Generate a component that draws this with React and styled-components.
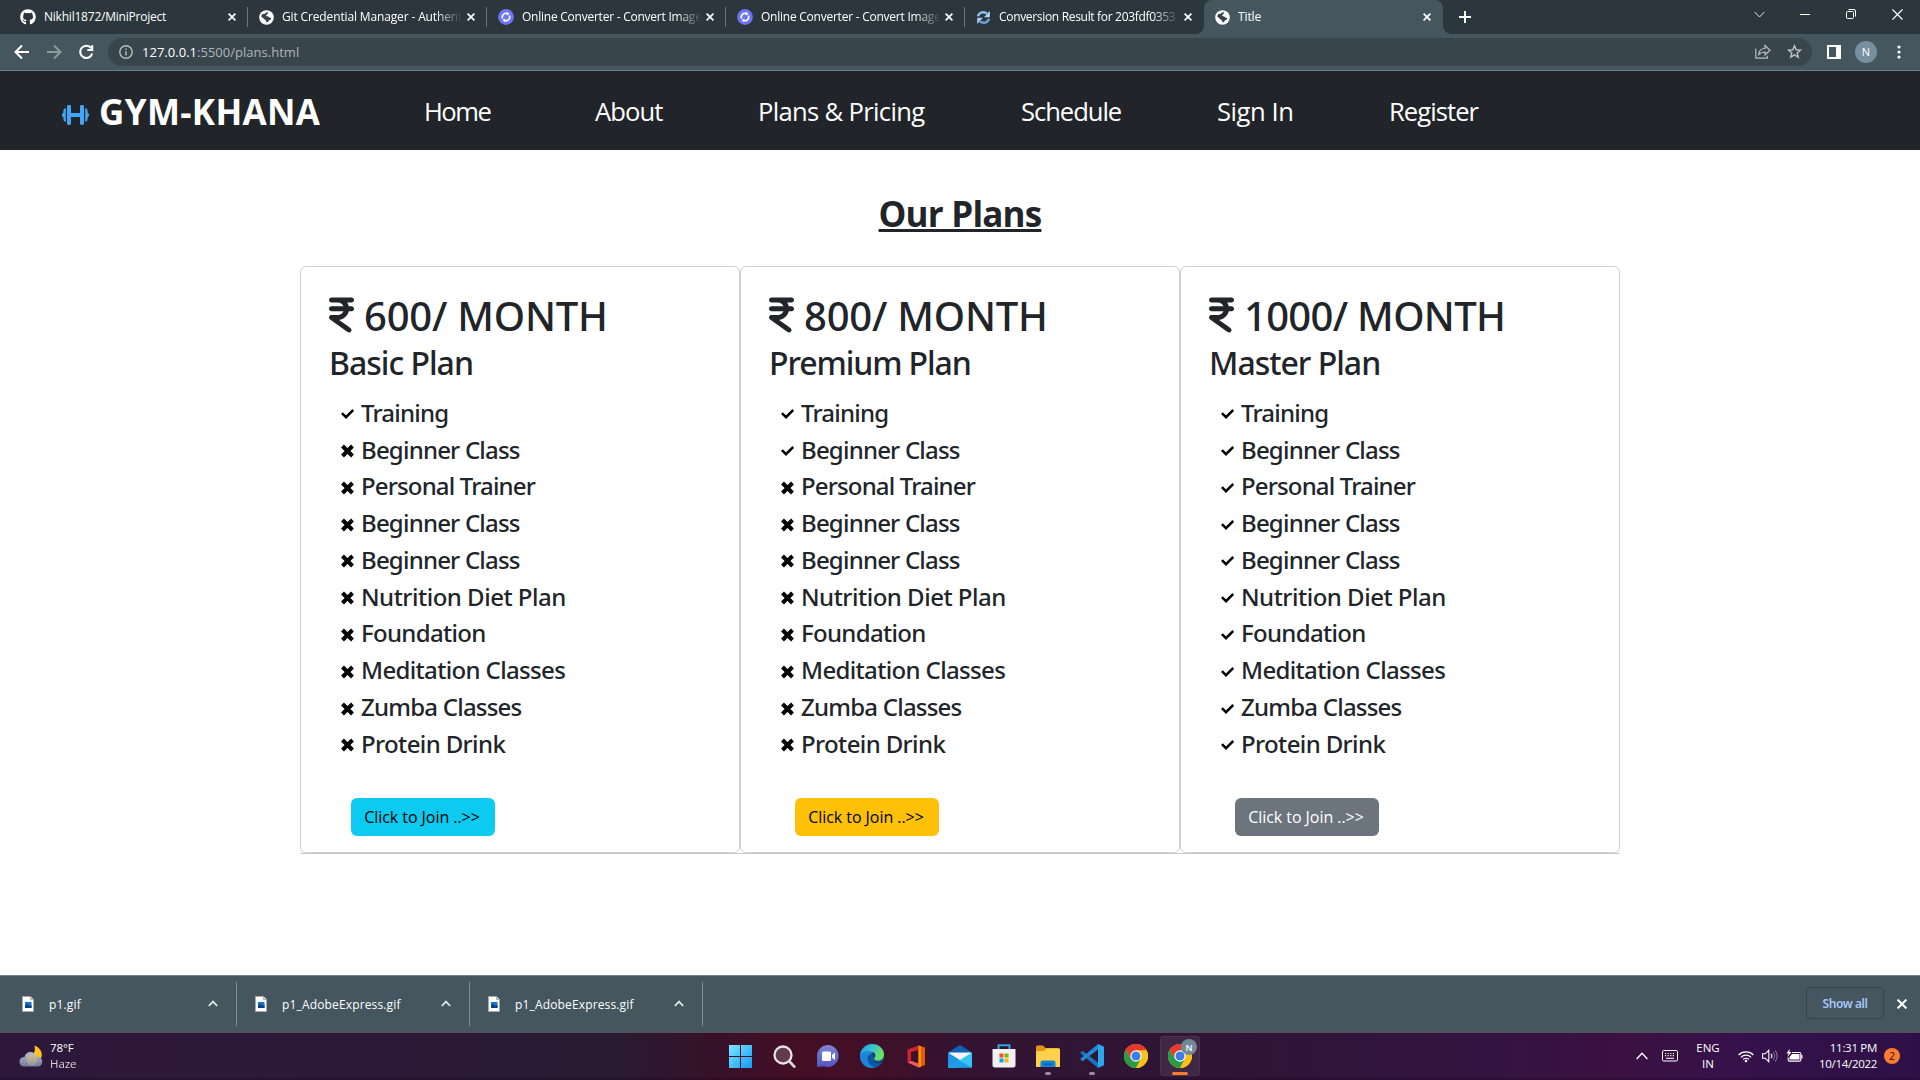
import React from "react";
import styled, { createGlobalStyle } from "styled-components";
import { FaGithub, FaIndianRupeeSign } from "react-icons/fa6";

const GlobalStyle = createGlobalStyle`
  * { box-sizing: border-box; }
  body { margin: 0; background: #fff; overflow: hidden; }
  body, button { font-family: "Open Sans", "Noto Sans", sans-serif; }
  svg { display: block; flex: none; }
`;

const Screen = styled.div`
  display: flex;
  flex-direction: column;
  width: 1920px;
  height: 1080px;
  background: #fff;
  overflow: hidden;
`;

/* ---------- browser chrome ---------- */

const TabStrip = styled.div`
  display: flex;
  height: 34px;
  padding-left: 9px;
  background: #2c373d;
  color: #fff;
`;

const Tab = styled.div`
  position: relative;
  display: flex;
  align-items: center;
  width: 239px;
  height: 34px;
  padding: 0 12px 0 11px;
  border-radius: 8px 8px 0 0;
  background: ${(p) => (p.$active ? "#45565f" : "transparent")};
  &::after {
    content: "";
    position: absolute;
    right: 0;
    top: 7px;
    width: 1px;
    height: 20px;
    background: ${(p) => (p.$divider ? "#67767d" : "transparent")};
  }
`;

const TabFoot = styled.div`
  align-self: flex-end;
  width: 8px;
  height: 8px;
  margin: ${(p) => (p.$left ? "0 0 0 -8px" : "0 -8px 0 0")};
  background: radial-gradient(circle at ${(p) => (p.$left ? "0 0" : "100% 0")}, transparent 7.5px, #45565f 8px);
`;

const TabTitle = styled.div`
  width: 178px;
  margin-left: 8px;
  overflow: hidden;
  white-space: nowrap;
  font-size: 12px;
  line-height: 18px;
  letter-spacing: ${(p) => p.$track}px;
  mask-image: ${(p) => (p.$fade ? "linear-gradient(90deg, #000 154px, transparent 180px)" : "none")};
`;

const TabClose = styled.div`
  display: flex;
  margin-left: auto;
`;

const NewTab = styled.div`
  display: flex;
  align-items: center;
  margin-left: 16px;
`;

const WindowControls = styled.div`
  display: flex;
  height: 28px;
  margin-left: auto;
  & > span {
    display: flex;
    align-items: center;
    justify-content: center;
    width: 46px;
  }
`;

const Toolbar = styled.div`
  display: flex;
  align-items: center;
  height: 37px;
  padding: 0 14px 1px 14px;
  border-bottom: 1px solid #6c8086;
  background: #45565f;
  color: #fff;
`;

const NavButtons = styled.div`
  display: flex;
  gap: 16px;
`;

const Omnibox = styled.div`
  display: flex;
  align-items: center;
  width: 1704px;
  height: 28px;
  margin-left: 14px;
  padding: 0 10px 0 11px;
  border-radius: 14px;
  background: #38454c;
`;

const Url = styled.div`
  flex: 1;
  margin-left: 9px;
  font-size: 13px;
  line-height: 20px;
  letter-spacing: 0.02px;
  color: #aeb6ba;
  & > span { color: #fff; }
`;

const OmniActions = styled.div`
  display: flex;
  align-items: center;
  gap: 16px;
`;

const ToolbarRight = styled.div`
  display: flex;
  align-items: center;
  margin-left: 15px;
`;

const Avatar = styled.div`
  display: flex;
  align-items: center;
  justify-content: center;
  width: 22px;
  height: 22px;
  margin: 0 20px 0 14px;
  border-radius: 50%;
  background: #7690a0;
  font-size: 11px;
`;

/* ---------- site ---------- */

const Navbar = styled.nav`
  display: flex;
  align-items: center;
  height: 79px;
  padding: 2px 0 0 62px;
  background: #212529;
  color: #fff;
`;

const Brand = styled.div`
  display: flex;
  align-items: center;
  width: 362px;
  font-size: 35px;
  font-weight: 700;
  line-height: 48px;
  letter-spacing: 0.35px;
  & > svg { margin: 7px 10px 0 0; }
`;

const NavLink = styled.a`
  width: ${(p) => p.$width}px;
  font-size: 25.6px;
  line-height: 38px;
  white-space: nowrap;
  letter-spacing: ${(p) => p.$track}px;
`;

const Page = styled.main`
  flex: 1;
  color: #212529;
`;

const Heading = styled.h1`
  margin: 0;
  padding-top: 42px;
  height: 116px;
  text-align: center;
  font-size: 35px;
  font-weight: 700;
  line-height: 44px;
  letter-spacing: -0.8px;
  text-decoration: underline;
  text-decoration-thickness: 3px;
  text-underline-offset: 2px;
`;

const Plans = styled.section`
  display: flex;
  width: 1320px;
  height: 588px;
  margin: 0 auto;
  border-bottom: 1px solid #c8c8c8;
`;

const Card = styled.article`
  width: 440px;
  height: 587px;
  padding: 25px 28px;
  border: 1px solid #d0d0d1;
  border-radius: 6px;
`;

const Price = styled.h2`
  display: flex;
  margin: 0;
  font-family: "Noto Sans", sans-serif;
  font-size: 40px;
  font-weight: 500;
  line-height: 48px;
  white-space: nowrap;
  letter-spacing: ${(p) => p.$track}px;
  & > svg {
    width: 25px;
    height: 40px;
    margin: 3px 10px 0 0;
  }
`;

const PlanName = styled.h3`
  margin: 4px 0 15.4px;
  font-family: "Noto Sans", sans-serif;
  font-size: 32px;
  font-weight: 500;
  line-height: 38.4px;
  letter-spacing: ${(p) => p.$track}px;
`;

const Features = styled.ul`
  display: flex;
  flex-direction: column;
  gap: 8px;
  margin: 0;
  padding: 0 0 0 12px;
  list-style: none;
`;

const Feature = styled.li`
  display: flex;
  align-items: center;
  height: 28.8px;
  font-family: "Noto Sans", sans-serif;
  font-size: 24px;
  font-weight: 500;
  white-space: nowrap;
  letter-spacing: ${(p) => p.$track}px;
  & > svg { margin: 4px 7px 0 0; }
`;

const JoinButton = styled.button`
  display: block;
  width: 144px;
  height: 38px;
  margin: 40.6px 0 0 ${(p) => p.$indent}px;
  padding: 0 2px 0 0;
  border: 0;
  border-radius: 6px;
  background: ${(p) => p.$bg};
  color: ${(p) => p.$fg};
  font-size: 16px;
  line-height: 24px;
  white-space: pre;
  letter-spacing: -0.05px;
`;

/* ---------- download shelf ---------- */

const Shelf = styled.div`
  display: flex;
  align-items: center;
  height: 58px;
  padding-right: 13px;
  border-top: 1px solid #6f8189;
  border-bottom: 1px solid #5d4c5c;
  background: #45565f;
  color: #fff;
`;

const Download = styled.div`
  display: flex;
  align-items: center;
  width: ${(p) => p.$width}px;
  height: 44px;
  padding: 0 18px 0 ${(p) => p.$width - 215}px;
  border-right: 1px solid #7f8f96;
  font-size: 12px;
  letter-spacing: 0.15px;
  & > svg { margin-bottom: 1px; }
  & > span { flex: 1; margin: 0 0 0 15px; }
`;

const ShowAll = styled.div`
  display: flex;
  align-items: center;
  justify-content: center;
  width: 78px;
  height: 32px;
  margin: 0 13px 2px auto;
  border: 1px solid #37444b;
  border-radius: 4px;
  color: #a5c5f8;
  font-family: "Noto Sans", sans-serif;
  font-size: 12px;
  font-weight: 600;
  letter-spacing: -0.4px;
`;

/* ---------- taskbar ---------- */

const Taskbar = styled.div`
  display: flex;
  align-items: center;
  height: 47px;
  padding-bottom: 1px;
  background:
    linear-gradient(180deg, transparent 44px, rgba(10, 0, 20, 0.3) 47px),
    linear-gradient(90deg, #2d183b 0, #2c1937 400px, #291b31 620px, #361129 715px, #430f25 790px, #430f26 860px, #351330 950px, #301534 1080px, #2e1537 1250px, #351340 1500px, #3a1141 1620px, #36114b 1740px, #2d1146 1920px);
  color: #fff;
`;

const Weather = styled.div`
  display: flex;
  align-items: center;
  width: 718px;
  padding-left: 19px;
  gap: 7px;
`;

const SmallLines = styled.div`
  display: flex;
  flex-direction: column;
  width: ${(p) => p.$width}px;
  text-align: ${(p) => p.$align || "left"};
  font-size: 11.5px;
  line-height: 16px;
  white-space: nowrap;
  letter-spacing: ${(p) => p.$track || 0}px;
  & > span:last-child { opacity: ${(p) => (p.$dim ? 0.8 : 1)}; }
`;

const AppSlot = styled.div`
  position: relative;
  display: flex;
  align-items: center;
  justify-content: center;
  width: 40px;
  height: 40px;
  margin: 0 2px;
  border-radius: 4px;
  background: ${(p) => (p.$active ? "rgba(255,255,255,0.08)" : "transparent")};
  box-shadow: ${(p) => (p.$active ? "inset 0 0 0 1px rgba(255,255,255,0.05)" : "none")};
  &::after {
    content: "";
    position: absolute;
    bottom: 1px;
    width: ${(p) => (p.$active ? 16 : p.$running ? 6 : 0)}px;
    height: 3px;
    border-radius: 2px;
    background: ${(p) => (p.$active ? "#ff7a2e" : "#998f9c")};
  }
`;

const ProfileBadge = styled.div`
  position: absolute;
  right: 3px;
  top: 3px;
  display: flex;
  align-items: center;
  justify-content: center;
  width: 16px;
  height: 16px;
  border-radius: 50%;
  background: #728a97;
  font-size: 9px;
  font-weight: 600;
`;

const Tray = styled.div`
  display: flex;
  align-items: center;
  margin-left: auto;
  padding-right: 20px;
`;

const TrayGap = styled.div`
  width: ${(p) => p.$width}px;
`;

const Count = styled.div`
  display: flex;
  align-items: center;
  justify-content: center;
  width: 16px;
  height: 16px;
  margin-left: 7px;
  border-radius: 50%;
  background: #ff7b30;
  color: #2a1024;
  font-size: 10.5px;
`;

/* ---------- drawings ---------- */

const Line = ({ w = 16, h = w, sw = 1, color = "#fff", d }) => (
  <svg width={w} height={h} viewBox={`0 0 ${w} ${h}`} fill="none" stroke={color} strokeWidth={sw}>
    <path d={d} />
  </svg>
);

const Cross = ({ size = 8, sw = 1.7 }) => (
  <Line w={size} sw={sw} d={`M.6 .6L${size - 0.6} ${size - 0.6}M${size - 0.6} .6L.6 ${size - 0.6}`} />
);

const Globe = () => (
  <svg width="15" height="15" viewBox="0 0 15 15">
    <circle cx="7.5" cy="7.5" r="7.3" fill="#fff" />
    <path d="M3 4.2C4.3 3.4 5.6 4.6 6.3 3.2C7.2 2.2 8.6 2 9.4 2.6C8.2 3.2 9 4.5 7.6 4.9C6.5 5.4 6.8 6.2 8.4 6.3C10 6.5 9.6 8 11.6 7.7C12.6 8.4 12.3 9.6 11 9.7C9.6 10 9.8 11.8 7.6 12.6C6.8 11.8 7.8 11 6.6 10C5.7 9.1 4.8 9.4 4.4 8.2C4 7.2 2.6 7.4 2.2 6.4Z" fill="#34434a" />
  </svg>
);

const Converter = () => (
  <svg width="16" height="16" viewBox="0 0 16 16" fill="none">
    <circle cx="8" cy="8" r="7.9" fill="#6d74f2" />
    <path d="M4.6 9.5A3.7 3.7 0 0 1 9.6 4.7M11.4 6.5A3.7 3.7 0 0 1 6.4 11.3" stroke="#fff" strokeWidth="1.6" />
    <path d="M9 2.8l2.6 2.3-3 1.3zM7 13.2l-2.6-2.3 3-1.3z" fill="#fff" />
  </svg>
);

const Refresh = () => (
  <svg width="15" height="15" viewBox="0 0 15 15" fill="none">
    <path d="M2 6.2C3 2.2 8 1 11 3.6" stroke="#8fc0ee" strokeWidth="2.4" />
    <path d="M13.8 1v6.2H8z" fill="#b5d6f5" />
    <path d="M13 8.8C12 12.8 7 14 4 11.4" stroke="#6fa3d8" strokeWidth="2.4" />
    <path d="M1.2 14V7.8H7z" fill="#a2c9f0" />
  </svg>
);

const Dumbbell = () => (
  <svg width="27" height="20" viewBox="0 0 27 20" fill="#42a5f5">
    <rect x="5" y="0" width="4" height="20" rx="1.4" />
    <rect x="18" y="0" width="4" height="20" rx="1.4" />
    <rect x="8" y="8" width="11" height="4" />
    <path d="M3.800 3.200v13.600C2 16.800 1.400 16 1.300 12 .300 11.800 0 11 0 10S.300 8.200 1.300 8C1.400 4 2 3.200 3.800 3.200zM23.200 3.200v13.600c1.800 0 2.400-.8 2.500-4.800 1-.2 1.300-1 1.300-2s-.3-1.800-1.300-2C25.600 4 25 3.200 23.200 3.200z" />
  </svg>
);

const Mark = ({ on }) =>
  on ? (
    <Line w={13} h={14} sw={2.5} color="#000" d="M.9 6.200L5 10.200L12.300 3" />
  ) : (
    <Line w={13} h={14} sw={4} color="#000" d="M1.500 2L11.500 12M11.500 2L1.500 12" />
  );

const FileIcon = () => (
  <svg width="12" height="16" viewBox="0 0 12 16">
    <path d="M.5.5h8l3 3v12H.5z" fill="#fff" stroke="#a9a9a9" />
    <path d="M8.500.500v3h3" fill="#ddd" stroke="#a9a9a9" />
    <rect x="3" y="6" width="6.500" height="6" fill="#1a73c8" />
    <path d="M3 12V9.500l2-1.500 2.500 2 2-1V12z" fill="#0b3f8c" />
  </svg>
);

const MoonCloud = () => (
  <svg width="24" height="22" viewBox="0 0 24 22">
    <defs>
      <linearGradient id="cloud" x1="0" y1="0" x2="0" y2="1">
        <stop offset="0" stopColor="#b4bdd6" /><stop offset="1" stopColor="#717a9d" />
      </linearGradient>
      <linearGradient id="haze" x1="0" y1="0" x2="0" y2="1">
        <stop offset="0" stopColor="#d0c28a" /><stop offset="1" stopColor="#9c9a94" />
      </linearGradient>
    </defs>
    <path d="M15.500.500C20 2 23 6 22.800 10.500C22.500 14 20 16 17 16.500L12 12C15.500 9 16.500 5 15.500.500z" fill="#ffc21f" />
    <path d="M5 21.500C2 21.500.500 19.500.500 16.500S2.500 12 5.500 12C6 9 8.500 7 11.500 7s5 2 5.300 4.500C20.500 11.300 23.300 13.500 23.300 16.500S21.500 21.500 18 21.500z" fill="url(#cloud)" />
    <circle cx="13" cy="15" r="5.500" fill="url(#haze)" opacity=".85" />
  </svg>
);

const WindowsLogo = () => (
  <svg width="23" height="23" viewBox="0 0 23 23">
    <defs>
      <linearGradient id="win" x1="0" y1="0" x2="1" y2="1">
        <stop offset="0" stopColor="#7ce6ff" /><stop offset="1" stopColor="#139bf5" />
      </linearGradient>
    </defs>
    <path d="M0 0h11v11H0zM12 0h11v11H12zM0 12h11v11H0zM12 12h11v11H12z" fill="url(#win)" />
  </svg>
);

const SearchIcon = () => (
  <svg width="23" height="23" viewBox="0 0 23 23" fill="none">
    <circle cx="10" cy="10" r="8.500" fill="rgba(255,255,255,.18)" stroke="#e6e3e5" strokeWidth="2.300" />
    <path d="M16.300 16.300L21.300 21.600" stroke="#d9d5d8" strokeWidth="2.800" strokeLinecap="round" />
  </svg>
);

const ChatIcon = () => (
  <svg width="24" height="24" viewBox="0 0 24 24">
    <defs>
      <linearGradient id="chat" x1="0" y1="0" x2="0" y2="1">
        <stop offset="0" stopColor="#7e86cf" /><stop offset="1" stopColor="#5356c4" />
      </linearGradient>
    </defs>
    <path d="M12 1a11 11 0 1 1-4.500 21.200L1 23V12A11 11 0 0 1 12 1z" fill="url(#chat)" />
    <rect x="6" y="7.500" width="9" height="9.500" rx="1.300" fill="#fff" />
    <path d="M16 10.700l3-2.300v7.600l-3-2.300z" fill="#fff" />
  </svg>
);

const EdgeIcon = () => (
  <svg width="24" height="24" viewBox="0 0 24 24">
    <defs>
      <linearGradient id="edge" x1="0" y1="0" x2="1" y2=".4">
        <stop offset="0" stopColor="#1f95dc" /><stop offset=".5" stopColor="#35c1d8" /><stop offset="1" stopColor="#6be35d" />
      </linearGradient>
    </defs>
    <circle cx="12" cy="12" r="12" fill="#0c59a4" />
    <path d="M0 12C.5 5 5.500 0 12 0c7 0 12 5 12 10.500 0 4-3 6-6 6-2.500 0-4.500-1-3.500-2.500 1.500-2.500.5-6-3.500-6C6 8 2 10 0 12z" fill="url(#edge)" />
    <path d="M0 12C1 8.500 4.500 7 8 7c3 0 5 1 6 3C8.500 8.500 6.500 13 8 17c1 3 3.500 5.500 7 6.500C7 25.500 0 20 0 12z" fill="#1b86d6" />
    <path d="M14.500 14c1-1.500 1.500-4-.8-5.400C9.500 8.500 9 13.500 11.500 16c3.500 3 8 2 11.500.500 1-.5.500.700-.3 1.800-2.700 1.200-9 2.200-12.200-3.300C9 12 10 9.800 12 9.200" fill="#431028" opacity=".55" />
  </svg>
);

const OfficeIcon = () => (
  <svg width="20" height="23" viewBox="0 0 20 23">
    <path d="M12.500.500L19 2.500V20l-6.500 2.500z" fill="#e8590c" />
    <path d="M12.500.500L1.500 4.500v13l3.500-1.800V7l7.500-2z" fill="#d2232a" />
    <path d="M1.500 17.500l3.500-1.800 7.500 2.800v4z" fill="#f3565d" />
    <path d="M12.500.500L15 1.500v20l-2.500 1z" fill="#ff9800" />
  </svg>
);

const MailIcon = () => (
  <svg width="24" height="23" viewBox="0 0 24 23">
    <path d="M0 7.500L12 0l12 7.500-12 8z" fill="#0c62b8" />
    <path d="M1 7.500h22V15H1z" fill="#f5f5f5" />
    <path d="M0 7.500L15 17 9 23H0z" fill="#1b97ea" />
    <path d="M24 7.500L0 22.500h24z" fill="#35c4f3" />
    <path d="M0 22.500L11 15.500l13 7z" fill="#1d9cec" />
  </svg>
);

const StoreIcon = () => (
  <svg width="24" height="24" viewBox="0 0 24 24">
    <path d="M6.500 6V1.200h11V6" fill="none" stroke="#2aa7e8" strokeWidth="2" />
    <path d="M.500 5h23v16a2.500 2.500 0 0 1-2.500 2.500H3A2.500 2.500 0 0 1 .500 21z" fill="#f1f0f2" />
    <path d="M7.500 9.500h4v4h-4z" fill="#f25022" /><path d="M12.500 9.500h4v4h-4z" fill="#7fba00" />
    <path d="M7.500 14.500h4v4h-4z" fill="#00a4ef" /><path d="M12.500 14.500h4v4h-4z" fill="#ffb900" />
  </svg>
);

const ExplorerIcon = () => (
  <svg width="24" height="23" viewBox="0 0 24 23">
    <path d="M0 2a1.500 1.500 0 0 1 1.500-1.500H7L9.500 3H22.500A1.500 1.500 0 0 1 24 4.500V9H0z" fill="#dd9a10" />
    <path d="M0 6h8l2-2.500h12.500A1.500 1.500 0 0 1 24 5v17H0z" fill="#ffd04c" />
    <path d="M4.500 22v-4.500a2 2 0 0 1 2-2h11a2 2 0 0 1 2 2V22z" fill="#1583d8" />
    <path d="M8 18.500h8V20H8z" fill="#0b5ca8" />
  </svg>
);

const CodeIcon = () => (
  <svg width="24" height="24" viewBox="0 0 24 24">
    <path d="M.500 8.500L2.500 6.800 18 18.500V24L.700 9.600z" fill="#1576bd" />
    <path d="M.500 15.500l2 1.700L18 5.500V0L.700 14.400z" fill="#1c8ad4" />
    <path d="M18 0l6 2.800v18.400L18 24z" fill="#2ea6ee" />
  </svg>
);

const ChromeIcon = () => (
  <svg width="24" height="24" viewBox="0 0 24 24">
    <circle cx="12" cy="12" r="12" fill="#fbc116" />
    <path d="M12 6.500H22.700A12 12 0 0 0 1.600 6l5.600 9z" fill="#e33b2e" />
    <path d="M1.600 6A12 12 0 0 0 12 24l5-9.200-5 2.700-5-2.700z" fill="#2a9a48" />
    <path d="M17 14.800L12 24A12 12 0 0 0 22.700 6.500H12z" fill="#fbc116" />
    <circle cx="12" cy="12" r="5.700" fill="#fff" />
    <circle cx="12" cy="12" r="4.500" fill="#3b7de8" />
  </svg>
);

const Keyboard = () => (
  <svg width="16" height="12" viewBox="0 0 16 12" fill="none" stroke="#fff">
    <rect x=".5" y=".5" width="15" height="10.500" rx="1.200" />
    <path d="M3 3.500h10M3 5.700h10" strokeWidth="1.200" strokeDasharray="1.200 1.400" />
    <path d="M4 8.300h8" />
  </svg>
);

const Wifi = () => (
  <svg width="16" height="13" viewBox="0 0 16 13" fill="none" stroke="#fff" strokeWidth="1.200">
    <path d="M.6 5A10.300 10.300 0 0 1 15.400 5M2.900 7.300a7.200 7.200 0 0 1 10.200 0M5.100 9.400a4.200 4.200 0 0 1 5.800 0" />
    <circle cx="8" cy="11" r="1.300" fill="#fff" stroke="none" />
  </svg>
);

const Speaker = () => (
  <svg width="16" height="14" viewBox="0 0 16 14" fill="none" stroke="#fff" strokeWidth="1.100">
    <path d="M.6 4.800h2.600L6.800 1.300v11.400L3.200 9.200H.6zM9 4.800a3.500 3.500 0 0 1 0 4.400" />
    <path d="M11 3a6 6 0 0 1 0 8M13 1.300a8.500 8.500 0 0 1 0 11.400" opacity=".4" />
  </svg>
);

const Battery = () => (
  <svg width="17" height="14" viewBox="0 0 17 14" fill="none" stroke="#fff">
    <path d="M6 3.500h7.500a1.300 1.300 0 0 1 1.300 1.300v6a1.300 1.300 0 0 1-1.300 1.300h-10a1.300 1.300 0 0 1-1.300-1.300V8.500" strokeWidth="1.100" />
    <path d="M6 5h7.500v5.500h-10V8z" fill="#fff" stroke="none" />
    <path d="M15.800 6v3.500" strokeWidth="1.300" />
    <path d="M3.500 0L.5 4.500h2L1.500 8 5.500 3h-2z" fill="#fff" stroke="none" />
  </svg>
);

/* ---------- data ---------- */

const tabs = [
  { title: "Nikhil1872/MiniProject", icon: <FaGithub size={16} />, track: -0.22 },
  { title: "Git Credential Manager - Authent", icon: <Globe />, fade: true, track: -0.14 },
  { title: "Online Converter - Convert Image", icon: <Converter />, fade: true, track: -0.24 },
  { title: "Online Converter - Convert Image", icon: <Converter />, fade: true, track: -0.24 },
  { title: "Conversion Result for 203fdf0353", icon: <Refresh />, fade: true, track: -0.32 },
  { title: "Title", icon: <Globe />, active: true, track: -0.1 },
];

const links = [
  ["Home", 171, -1.5],
  ["About", 163, -0.95],
  ["Plans & Pricing", 263, -0.67],
  ["Schedule", 196, -1.05],
  ["Sign In", 172, -0.45],
  ["Register", 120, -0.95],
];

const features = [
  ["Training", -0.8],
  ["Beginner Class", -0.8],
  ["Personal Trainer", -0.85],
  ["Beginner Class", -0.8],
  ["Beginner Class", -0.8],
  ["Nutrition Diet Plan", -0.5],
  ["Foundation", -0.68],
  ["Meditation Classes", -0.65],
  ["Zumba Classes", -0.78],
  ["Protein Drink", -0.63],
];

const plans = [
  { price: "600/ MONTH", track: -0.23, name: "Basic Plan", nameTrack: -1, included: 1, bg: "#0dcaf0", fg: "#000", indent: 22 },
  { price: "800/ MONTH", track: -0.23, name: "Premium Plan", nameTrack: -1.1, included: 2, bg: "#ffc107", fg: "#000", indent: 26 },
  { price: "1000/ MONTH", track: -0.7, name: "Master Plan", nameTrack: -1, included: 10, bg: "#6c757d", fg: "#fff", indent: 26 },
];

const downloads = [
  ["p1.gif", 237],
  ["p1_AdobeExpress.gif", 233],
  ["p1_AdobeExpress.gif", 233],
];

const apps = [
  { icon: <WindowsLogo /> },
  { icon: <SearchIcon /> },
  { icon: <ChatIcon /> },
  { icon: <EdgeIcon /> },
  { icon: <OfficeIcon /> },
  { icon: <MailIcon /> },
  { icon: <StoreIcon /> },
  { icon: <ExplorerIcon />, running: true },
  { icon: <CodeIcon />, running: true },
  { icon: <ChromeIcon /> },
  { icon: <ChromeIcon />, active: true, badge: "N" },
];

export default function App() {
  return (
    <Screen>
      <GlobalStyle />
      <TabStrip>
        {tabs.map((t, i) => (
          <React.Fragment key={i}>
            {t.active && <TabFoot $left />}
            <Tab $active={t.active} $divider={i < 4}>
              {t.icon}
              <TabTitle $fade={t.fade} $track={t.track}>{t.title}</TabTitle>
              <TabClose><Cross /></TabClose>
            </Tab>
            {t.active && <TabFoot />}
          </React.Fragment>
        ))}
        <NewTab><Line w={12} sw={2} d="M6 0v12M0 6h12" /></NewTab>
        <WindowControls>
          <span><Line w={11} h={7} sw={1} color="#dfe2e4" d="M.5 .8L5.500 6L10.500 .8" /></span>
          <span><Line w={10} h={1} sw={2} d="M0 .5h10" /></span>
          <span><Line w={10} h={10} sw={1} d="M1.500 2.500h5a1 1 0 0 1 1 1v5a1 1 0 0 1-1 1h-5a1 1 0 0 1-1-1v-5a1 1 0 0 1 1-1zM2.500 .5H8a1.500 1.500 0 0 1 1.500 1.500V7.500" /></span>
          <span><Line w={11} sw={1.200} d="M.5 .5l10 10M10.500 .5l-10 10" /></span>
        </WindowControls>
      </TabStrip>

      <Toolbar>
        <NavButtons>
          <Line w={16} sw={2} d="M15 8H2M8 1.500L1.500 8L8 14.500" />
          <Line w={16} sw={2} color="#8e9a9f" d="M1 8H14M8 1.500L14.500 8L8 14.500" />
          <Line w={16} sw={2.100} d="M13.200 4.200A6.100 6.100 0 1 0 14.200 9.500M14.200 1.200V6H9.300" />
        </NavButtons>
        <Omnibox>
          <svg width="14" height="14" viewBox="0 0 14 14" fill="none" stroke="#b9c0c4" strokeWidth="1.400">
            <circle cx="7" cy="7" r="6.200" />
            <path d="M7 6.200v4.200M7 3.500v1.500" />
          </svg>
          <Url><span>127.0.0.1</span>:5500/plans.html</Url>
          <OmniActions>
            <Line w={16} h={15} sw={1.200} color="#b9bfc2" d="M.800 4.500v9.700h11.500v-2.500M3.800 10.500C4 6.500 6.500 4.500 10 4.500V1.500l5 4.700-5 4.600V8C7.500 8 5.500 8.500 3.800 10.500z" />
            <Line w={15} sw={1.500} color="#b9bfc2" d="M7.500 1.700l1.700 4 4.300.4-3.300 2.800 1 4.200-3.700-2.200-3.700 2.200 1-4.200L1.500 6.100l4.300-.4z" />
          </OmniActions>
        </Omnibox>
        <ToolbarRight>
          <svg width="14" height="14" viewBox="0 0 14 14">
            <path d="M0 0h14v14H0zM2 2v10h7V2z" fill="#fff" fillRule="evenodd" />
          </svg>
          <Avatar>N</Avatar>
          <svg width="4" height="14" viewBox="0 0 4 14" fill="#fff">
            <circle cx="2" cy="2" r="1.600" /><circle cx="2" cy="7" r="1.600" /><circle cx="2" cy="12" r="1.600" />
          </svg>
        </ToolbarRight>
      </Toolbar>

      <Navbar>
        <Brand><Dumbbell />GYM-KHANA</Brand>
        {links.map(([label, width, track]) => (
          <NavLink key={label} $width={width} $track={track}>{label}</NavLink>
        ))}
      </Navbar>

      <Page>
        <Heading>Our Plans</Heading>
        <Plans>
          {plans.map((plan) => (
            <Card key={plan.name}>
              <Price $track={plan.track}><FaIndianRupeeSign />{plan.price}</Price>
              <PlanName $track={plan.nameTrack}>{plan.name}</PlanName>
              <Features>
                {features.map(([label, track], i) => (
                  <Feature key={i} $track={track}><Mark on={i < plan.included} />{label}</Feature>
                ))}
              </Features>
              <JoinButton $bg={plan.bg} $fg={plan.fg} $indent={plan.indent}>{"Click to Join ..>>"}</JoinButton>
            </Card>
          ))}
        </Plans>
      </Page>

      <Shelf>
        {downloads.map(([name, width], i) => (
          <Download key={i} $width={width}>
            <FileIcon />
            <span>{name}</span>
            <Line w={10} h={7} sw={1.800} color="#e3e7e9" d="M.8 6L5 1.600L9.200 6" />
          </Download>
        ))}
        <ShowAll>Show all</ShowAll>
        <Cross size={10} sw={2} />
      </Shelf>

      <Taskbar>
        <Weather>
          <MoonCloud />
          <SmallLines $width={40} $dim $track={-0.1}><span>78°F</span><span>Haze</span></SmallLines>
        </Weather>
        {apps.map((app, i) => (
          <AppSlot key={i} $active={app.active} $running={app.running}>
            {app.icon}
            {app.badge && <ProfileBadge>{app.badge}</ProfileBadge>}
          </AppSlot>
        ))}
        <Tray>
          <Line w={12} h={8} sw={1.300} d="M.6 7L6 1.300L11.400 7" />
          <TrayGap $width={14} />
          <Keyboard />
          <TrayGap $width={17} />
          <SmallLines $width={26} $align="center"><span>ENG</span><span>IN</span></SmallLines>
          <TrayGap $width={17} />
          <Wifi />
          <TrayGap $width={8} />
          <Speaker />
          <TrayGap $width={8} />
          <Battery />
          <TrayGap $width={14} />
          <SmallLines $width={60} $align="right" $track={-0.3}><span>11:31 PM</span><span>10/14/2022</span></SmallLines>
          <Count>2</Count>
        </Tray>
      </Taskbar>
    </Screen>
  );
}
